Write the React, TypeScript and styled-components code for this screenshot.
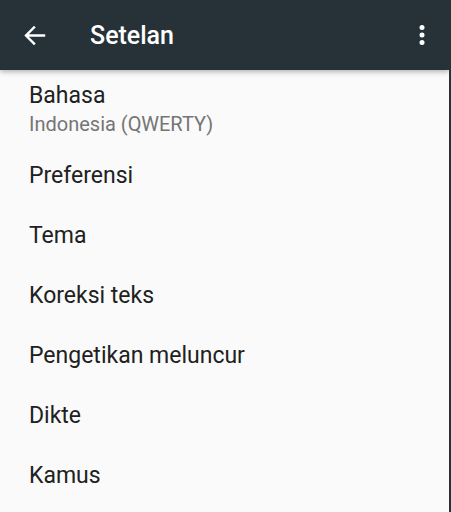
import React from "react";
import styled, { createGlobalStyle } from "styled-components";

const Global = createGlobalStyle`
  html, body {
    margin: 0;
    padding: 0;
    background: #fafafa;
  }
  body {
    font-family: Roboto, "Noto Sans", "Liberation Sans", sans-serif;
  }
`;

const Screen = styled.div`
  width: 449px;
  height: 512px;
  border-right: 2px solid #263238;
  background: #fafafa;
  display: flex;
  flex-direction: column;
  overflow: hidden;
`;

const Toolbar = styled.header`
  position: relative;
  height: 70px;
  flex: 0 0 70px;
  background: #263238;
  display: flex;
  align-items: center;
  padding: 0 12px 0 19px;
  box-sizing: border-box;
  box-shadow: 0 2px 5px rgba(0, 0, 0, 0.28);
  z-index: 1;
`;

const IconButton = styled.div`
  width: 30px;
  height: 30px;
  display: flex;
  align-items: center;
  justify-content: center;
  flex: 0 0 30px;
`;

const Title = styled.h1`
  margin: 0 0 0 41px;
  flex: 1;
  font-size: 25px;
  font-weight: 500;
  color: #ffffff;
  line-height: 70px;
  padding-top: 2px;
  letter-spacing: 0;
`;

const List = styled.ul`
  list-style: none;
  margin: 0;
  padding: 0;
  display: flex;
  flex-direction: column;
`;

const Item = styled.li<{ $twoLine?: boolean }>`
  box-sizing: border-box;
  padding: ${(p) => (p.$twoLine ? "12px 0 0 29px" : "0 0 0 29px")};
  height: ${(p) => (p.$twoLine ? "76px" : "60px")};
  display: flex;
  flex-direction: column;
  justify-content: ${(p) => (p.$twoLine ? "flex-start" : "center")};
  gap: 3px;
`;

const ItemTitle = styled.div<{ $single?: boolean }>`
  font-size: 23px;
  line-height: ${(p) => (p.$single ? "60px" : "27px")};
  color: #212121;
`;

const ItemSub = styled.div`
  font-size: 20px;
  line-height: 24px;
  color: #757575;
`;

const BackIcon = () => (
  <svg width="30" height="30" viewBox="0 0 30 30">
    <path
      d="M25 15.5H7.5M15 7.5L7 15.5L15 23.5"
      fill="none"
      stroke="#ffffff"
      strokeWidth="2.4"
      strokeLinecap="square"
    />
  </svg>
);

const MoreIcon = () => (
  <svg width="30" height="30" viewBox="0 0 30 30">
    <circle cx="15" cy="7.5" r="2.5" fill="#ffffff" />
    <circle cx="15" cy="15" r="2.5" fill="#ffffff" />
    <circle cx="15" cy="22.5" r="2.5" fill="#ffffff" />
  </svg>
);

const items = [
  "Preferensi",
  "Tema",
  "Koreksi teks",
  "Pengetikan meluncur",
  "Dikte",
  "Kamus",
];

export default function App() {
  return (
    <>
      <Global />
      <Screen>
        <Toolbar>
          <IconButton>
            <BackIcon />
          </IconButton>
          <Title>Setelan</Title>
          <IconButton>
            <MoreIcon />
          </IconButton>
        </Toolbar>
        <List>
          <Item $twoLine>
            <ItemTitle>Bahasa</ItemTitle>
            <ItemSub>Indonesia (QWERTY)</ItemSub>
          </Item>
          {items.map((t) => (
            <Item key={t}>
              <ItemTitle $single>{t}</ItemTitle>
            </Item>
          ))}
        </List>
      </Screen>
    </>
  );
}
